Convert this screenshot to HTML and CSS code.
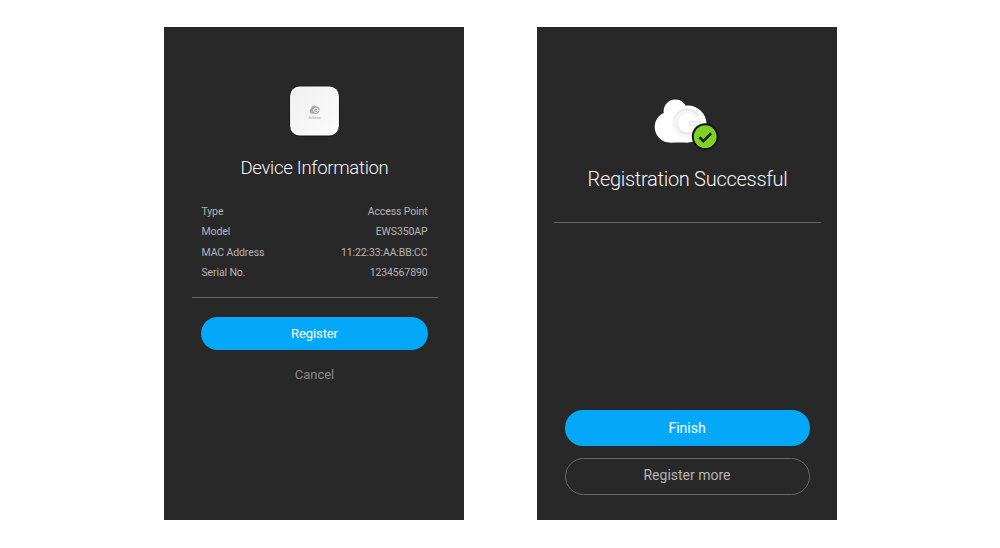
FILE: index.html
```html
<!DOCTYPE html>
<html lang="en">
<head>
<meta charset="utf-8">
<title>Device Registration</title>
<link rel="stylesheet" href="styles.css">
</head>
<body>
<main class="screens">
  <section class="screen screen-device">
    <svg class="device-icon" width="52" height="52" viewBox="0 0 52 52">
      <defs>
        <linearGradient id="shell" x1="0" y1="0" x2="1" y2="1">
          <stop offset="0" stop-color="#f0f0f0"/>
          <stop offset="1" stop-color="#fbfbfb"/>
        </linearGradient>
      </defs>
      <g transform="translate(.5 0)">
        <rect x="1" y="1" width="50" height="50.5" rx="10.5" fill="#171514"/>
        <rect x="1.6" y="1.5" width="48.8" height="49" rx="9.5" fill="#fff"/>
        <rect x="2.7" y="2.6" width="46.6" height="46.4" rx="8.6" fill="url(#shell)"/>
        <path d="M22.2 28.4C20.6 26.6 21 24.2 22.7 23.3C22.8 20.5 26.3 19.8 27.7 21.6C30 21.4 31.5 23.3 31 25.6C30.6 28 28.6 29.3 26.8 28.9L22.2 28.4Z" fill="#aaa"/>
        <circle cx="27.2" cy="25.4" r="2.2" fill="none" stroke="#eee" stroke-width="1"/>
        <path d="M27 25.4H30.4" stroke="#eee" stroke-width=".8"/>
        <text class="device-brand" x="26" y="33.5" text-anchor="middle" textLength="12">EnGenius</text>
      </g>
    </svg>
    <h1 class="title title-device">Device Information</h1>
    <dl class="details">
      <div class="row"><dt>Type</dt><dd>Access Point</dd></div>
      <div class="row"><dt>Model</dt><dd>EWS350AP</dd></div>
      <div class="row"><dt>MAC Address</dt><dd>11:22:33:AA:BB:CC</dd></div>
      <div class="row"><dt>Serial No.</dt><dd>1234567890</dd></div>
    </dl>
    <hr class="divider divider-device">
    <button class="btn btn-primary btn-register">Register</button>
    <button class="btn-link">Cancel</button>
  </section>

  <section class="screen screen-success">
    <svg class="cloud-icon" width="70" height="54" viewBox="0 0 70 54">
      <g fill="#fff">
        <circle cx="23.3" cy="14.3" r="11.7"/>
        <circle cx="18.2" cy="30" r="15.5"/>
        <circle cx="36" cy="27" r="18.5"/>
        <rect x="18" y="30" width="18" height="15.5"/>
      </g>
      <!-- Embossed G: outline with a lighter fill on top -->
      <g fill="none">
        <path d="M45.2 19.2A12 12 0 1 0 46.6 30V26.6H37" stroke="#e4e4e4" stroke-width="4.6"/>
        <path d="M44.6 19.6A12 12 0 1 0 46.6 30V26.6H37.8" stroke="#f6f6f6" stroke-width="3.2"/>
      </g>
      <circle cx="53.2" cy="39.6" r="13.4" fill="#151418"/>
      <circle cx="53.2" cy="39.7" r="11.4" fill="#7ed321"/>
      <path d="M47.4 40.3L51.4 44.1L59.1 36.2" fill="none" stroke="#20212a" stroke-width="2.7"/>
    </svg>
    <h1 class="title title-success">Registration Successful</h1>
    <hr class="divider divider-success">
    <div class="actions">
      <button class="btn btn-primary">Finish</button>
      <button class="btn btn-outline">Register more</button>
    </div>
  </section>
</main>
</body>
</html>
```
FILE: styles.css
```css
* {
  box-sizing: border-box;
}

body {
  margin: 0;
  background: #fff;
  font-family: Roboto, "Liberation Sans", sans-serif;
}

.screens {
  display: flex;
  gap: 73px;
  padding: 27px 0 0 164px;
}

.screen {
  display: flex;
  flex-direction: column;
  align-items: center;
  width: 300px;
  height: 493px;
  background: #282828;
}

.screen-device {
  padding: 58px 26.5px 0 27.5px;
}

.screen-success {
  padding: 70px 16px 25px 17px;
}

.device-icon,
.cloud-icon {
  display: block;
  flex: none;
  margin-left: -1px;
}

.device-brand {
  font-size: 3.4px;
  fill: #aaa;
}

.title {
  margin: 0;
  color: #f6f6f6;
  font-weight: 300;
  white-space: nowrap;
}

.title-device {
  margin-top: 18.5px;
  font-size: 18.5px;
  line-height: 24px;
  letter-spacing: -0.28px;
}

.title-success {
  margin-top: 15px;
  font-size: 20px;
  line-height: 26px;
  letter-spacing: -0.28px;
}

.details {
  width: 226px;
  margin: 22px 0 0;
  color: #b4b4b4;
  font-size: 10.5px;
  line-height: 20.5px;
  letter-spacing: -0.12px;
}

.row {
  display: flex;
  justify-content: space-between;
}

.row dd {
  margin: 0;
}

.divider {
  flex: none;
  align-self: stretch;
  height: 1px;
  margin: 0;
  border: 0;
  background: #666;
}

.divider-device {
  margin-top: 13.5px;
}

.divider-success {
  margin-top: 30px;
}

.btn {
  flex: none;
  width: 245px;
  height: 36px;
  padding: 0;
  border: 0;
  border-radius: 18px;
  font: 400 14px/37px Roboto, "Liberation Sans", sans-serif;
}

.btn-primary {
  background: #03a9f8;
  color: #fff;
}

.btn-register {
  width: 227px;
  height: 33px;
  margin-top: 19px;
  font-size: 13px;
  line-height: 33px;
  letter-spacing: -0.1px;
}

.btn-link {
  margin-top: 15px;
  padding: 0;
  border: 0;
  background: none;
  color: #888;
  font: 400 13px/20px Roboto, "Liberation Sans", sans-serif;
}

.actions {
  display: flex;
  flex-direction: column;
  gap: 12px;
  margin: auto 1px 0 0;
}

.btn-outline {
  height: 37px;
  padding-bottom: 2px;
  border: 1px solid #686868;
  border-radius: 18.5px;
  background: none;
  color: #b4b4b4;
  line-height: 33px;
}
```
